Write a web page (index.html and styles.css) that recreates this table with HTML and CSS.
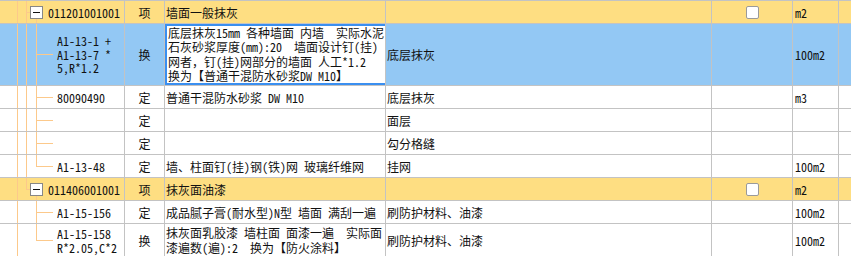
FILE: index.html
```html
<!DOCTYPE html>
<html lang="zh-CN">
<head>
<meta charset="utf-8">
<title>清单</title>
<link rel="stylesheet" href="styles.css">
</head>
<body>
<div class="grid">
  <div class="row grp">
    <div class="c code"><span class="pad"></span><span class="v w9"></span><span class="tee w4"></span><span class="node"><span class="box"></span></span><span class="txt gtxt">011201001001</span></div>
    <div class="c type">项</div>
    <div class="c desc">墙面一般抹灰</div>
    <div class="c name"></div>
    <div class="c chk"><span class="cb"></span></div>
    <div class="c unit">m2</div>
    <div class="c end"></div>
  </div>
  <div class="row sel">
    <div class="c code"><span class="pad"></span><span class="v w9"></span><span class="v w10"></span><span class="tee w17"></span><span class="txt ctxt ml">A1-13-1 +<br>A1-13-7 *<br>5,R*1.2</span></div>
    <div class="c type">换</div>
    <div class="c desc edit"><div class="editor">底层抹灰15mm 各种墙面 内墙  实际水泥<br>石灰砂浆厚度(mm):20  墙面设计钉(挂)<br>网者，钉(挂)网部分的墙面 人工*1.2<br>换为【普通干混防水砂浆DW M10】</div></div>
    <div class="c name">底层抹灰</div>
    <div class="c chk"></div>
    <div class="c unit">100m2</div>
    <div class="c end"></div>
  </div>
  <div class="row">
    <div class="c code"><span class="pad"></span><span class="v w9"></span><span class="v w10"></span><span class="tee w17"></span><span class="txt ctxt">80090490</span></div>
    <div class="c type">定</div>
    <div class="c desc">普通干混防水砂浆 DW M10</div>
    <div class="c name">底层抹灰</div>
    <div class="c chk"></div>
    <div class="c unit">m3</div>
    <div class="c end"></div>
  </div>
  <div class="row">
    <div class="c code"><span class="pad"></span><span class="v w9"></span><span class="v w10"></span><span class="tee w17"></span><span class="txt ctxt"></span></div>
    <div class="c type">定</div>
    <div class="c desc"></div>
    <div class="c name">面层</div>
    <div class="c chk"></div>
    <div class="c unit"></div>
    <div class="c end"></div>
  </div>
  <div class="row">
    <div class="c code"><span class="pad"></span><span class="v w9"></span><span class="v w10"></span><span class="tee w17"></span><span class="txt ctxt"></span></div>
    <div class="c type">定</div>
    <div class="c desc"></div>
    <div class="c name">勾分格缝</div>
    <div class="c chk"></div>
    <div class="c unit"></div>
    <div class="c end"></div>
  </div>
  <div class="row">
    <div class="c code"><span class="pad"></span><span class="v w9"></span><span class="v w10"></span><span class="ell w17"></span><span class="txt ctxt">A1-13-48</span></div>
    <div class="c type">定</div>
    <div class="c desc">墙、柱面钉(挂)钢(铁)网 玻璃纤维网</div>
    <div class="c name">挂网</div>
    <div class="c chk"></div>
    <div class="c unit">100m2</div>
    <div class="c end"></div>
  </div>
  <div class="row grp">
    <div class="c code"><span class="pad"></span><span class="v w9"></span><span class="ell w4"></span><span class="node"><span class="box"></span></span><span class="txt gtxt">011406001001</span></div>
    <div class="c type">项</div>
    <div class="c desc">抹灰面油漆</div>
    <div class="c name"></div>
    <div class="c chk"><span class="cb"></span></div>
    <div class="c unit">m2</div>
    <div class="c end"></div>
  </div>
  <div class="row">
    <div class="c code"><span class="pad"></span><span class="v w9"></span><span class="blank w10"></span><span class="tee w17"></span><span class="txt ctxt">A1-15-156</span></div>
    <div class="c type">定</div>
    <div class="c desc">成品腻子膏(耐水型)N型 墙面 满刮一遍</div>
    <div class="c name">刷防护材料、油漆</div>
    <div class="c chk"></div>
    <div class="c unit">100m2</div>
    <div class="c end"></div>
  </div>
  <div class="row tall">
    <div class="c code"><span class="pad"></span><span class="v w9"></span><span class="blank w10"></span><span class="ell w17"></span><span class="txt ctxt ml">A1-15-158<br>R*2.05,C*2</span></div>
    <div class="c type">换</div>
    <div class="c desc"><span class="ml2">抹灰面乳胶漆 墙柱面 面漆一遍  实际面<br>漆遍数(遍):2  换为【防火涂料】</span></div>
    <div class="c name">刷防护材料、油漆</div>
    <div class="c chk"></div>
    <div class="c unit">100m2</div>
    <div class="c end"></div>
  </div>
</div>
</body>
</html>
```

FILE: styles.css
```css
:root {
  --tree: #fcc98b;
  --grid: #c3c3c3;
  --yellow: #fede82;
  --blue: #93c8f4;
}
html, body {
  margin: 0;
  padding: 0;
  background: #ffffff;
  overflow: hidden;
}
body {
  font-family: "Noto Sans Mono CJK SC", "Noto Sans CJK SC", monospace;
  font-size: 12px;
  color: #111;
}
.grid {
  border-top: 1px solid var(--grid);
  width: 851px;
}
.row {
  display: flex;
  height: 23px;
  box-sizing: border-box;
  border-bottom: 1px solid var(--grid);
  background: #fff;
}
.row.grp { background: var(--yellow); }
.row.sel { background: var(--blue); height: 62px; }
.row.tall { height: 34px; }
.c {
  box-sizing: border-box;
  border-right: 1px solid var(--grid);
  display: flex;
  align-items: center;
  white-space: pre;
  overflow: hidden;
}
.code { width: 125px; align-items: stretch; }
.type { width: 40px; justify-content: center; }
.desc { width: 221px; padding-left: 1px; }
.name { width: 326px; padding-left: 1px; }
.chk { width: 81px; justify-content: center; }
.unit { width: 46px; padding-left: 2px; }
.end { flex: 1; border-right: none; }

.pad { width: 17px; flex: none; }
.w4 { width: 4px; flex: none; }
.w9 { width: 9px; flex: none; }
.w10 { width: 10px; flex: none; }
.w17 { width: 17px; flex: none; }
.v {
  background: linear-gradient(var(--tree), var(--tree)) left top / 1px 100% no-repeat;
}
.tee {
  background:
    linear-gradient(var(--tree), var(--tree)) left top / 1px 100% no-repeat,
    linear-gradient(var(--tree), var(--tree)) left 50% / 100% 1px no-repeat;
}
.ell {
  background:
    linear-gradient(var(--tree), var(--tree)) left top / 1px 50% no-repeat,
    linear-gradient(var(--tree), var(--tree)) left 50% / 100% 1px no-repeat;
}
.node {
  width: 13px;
  flex: none;
  display: flex;
  align-items: center;
  background: linear-gradient(var(--tree), var(--tree)) 6px bottom / 1px 50% no-repeat;
}
.box {
  width: 13px;
  height: 13px;
  box-sizing: border-box;
  border: 1px solid #878787;
  background: #fff;
  display: flex;
  align-items: center;
  justify-content: center;
  margin-top: 1px;
}
.box::before {
  content: "";
  width: 7px;
  height: 1px;
  background: #111;
}
.txt {
  display: flex;
  align-items: center;
}
.gtxt { margin-left: 5px; }
.ctxt { margin-left: 4px; }
.ml { line-height: 13.5px; }
.ml2 { line-height: 14.4px; }
.desc.edit {
  padding: 0;
  align-items: stretch;
}
.editor {
  flex: 1;
  background: #fff;
  border: 2px solid #3a8ff0;
  padding: 0 1px;
  display: flex;
  align-items: center;
  line-height: 14.4px;
}
.cb {
  width: 13px;
  height: 13px;
  box-sizing: border-box;
  border: 1px solid #9a9a9a;
  border-radius: 2px;
  background: #fff;
  margin-top: 1px;
}
```
